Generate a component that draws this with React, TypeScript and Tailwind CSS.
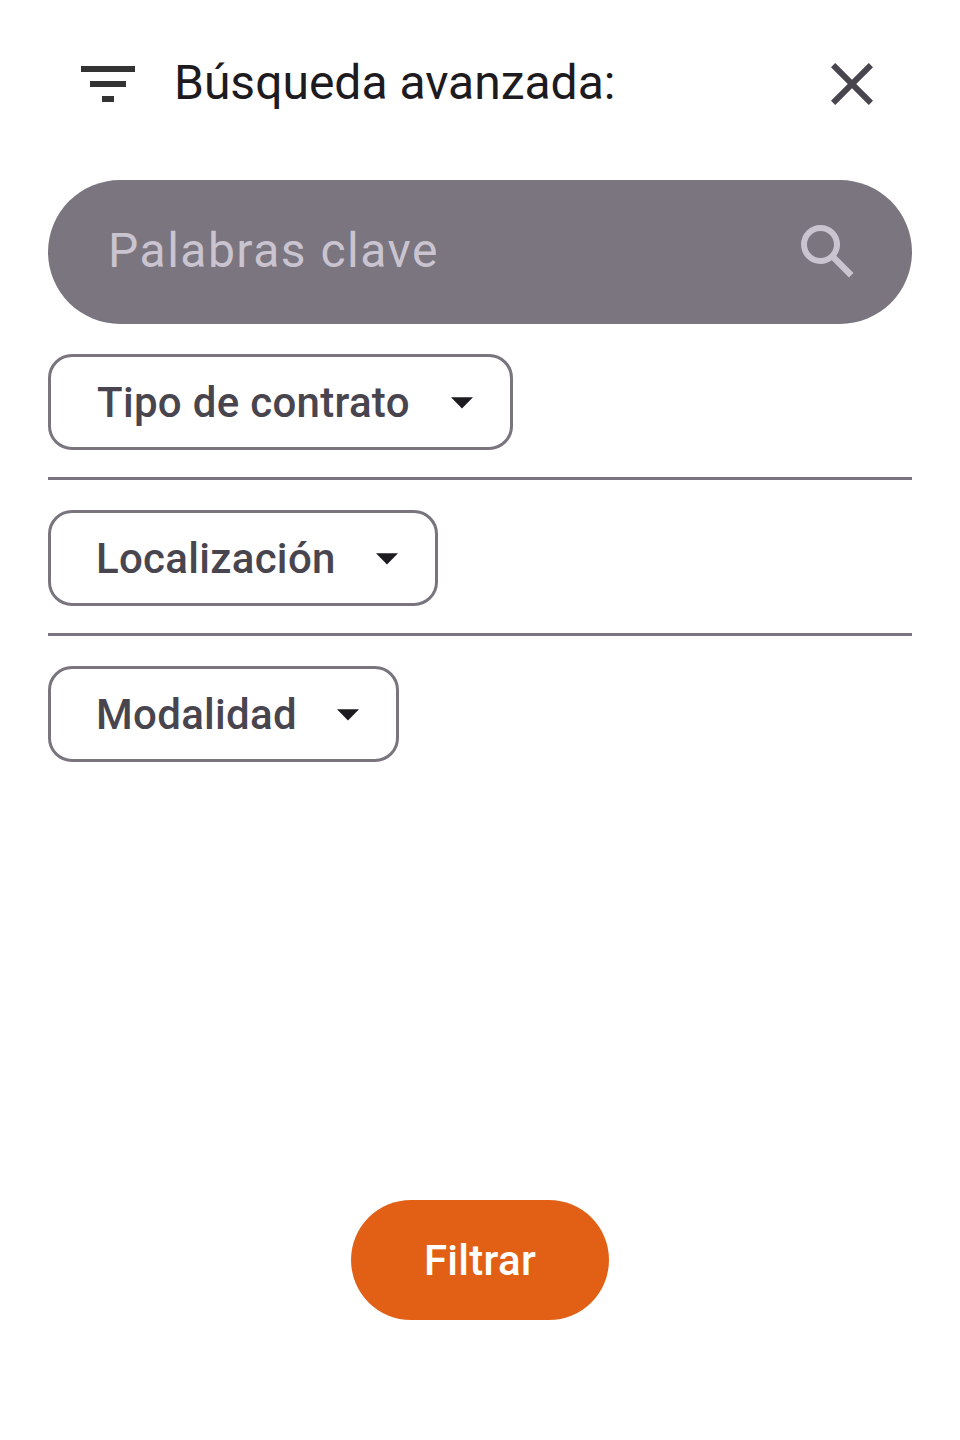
import React from "react";

const filters = [
  { label: "Tipo de contrato", size: "w-[465px] pl-[46px]" },
  { label: "Localización", size: "w-[390px] pl-[45px]" },
  { label: "Modalidad", size: "w-[351px] pl-[45px]" },
];

function FilterChip({ label, size }: { label: string; size: string }) {
  return (
    <button className={`flex h-24 items-center justify-between rounded-3xl border-[3px] border-[#79747e] pr-3 text-[42px] leading-[60px] font-medium tracking-[0.3px] text-[#49454f] ${size}`}>
      <span className="whitespace-nowrap pt-0.5">{label}</span>
      <svg className="size-[72px] shrink-0" viewBox="0 0 24 24" fill="#1d1b20">
        <path d="M8.33 10.4h7.34L12 14.2z" />
      </svg>
    </button>
  );
}

export default function App() {
  return (
    <main className="flex h-[1440px] w-[960px] flex-col bg-white px-12 font-['Roboto',sans-serif]">
      <header className="flex h-[168px] items-center pl-6 pr-6">
        <svg className="size-[72px]" viewBox="0 0 24 24" fill="#333333">
          <path d="M10 18h4v-2h-4v2zM3 6v2h18V6H3zm3 7h12v-2H6v2z" />
        </svg>
        <h1 className="ml-[30px] flex-1 pb-0.5 text-[48px] leading-[72px] font-normal text-[#1d1b20]">Búsqueda avanzada:</h1>
        <svg className="size-[72px]" viewBox="0 0 24 24" fill="#49454f">
          <path d="M19 6.41 17.59 5 12 10.59 6.41 5 5 6.41 10.59 12 5 17.59 6.41 19 12 13.41 17.59 19 19 17.59 13.41 12z" />
        </svg>
      </header>
      <div className="mt-3 flex h-36 items-center justify-between rounded-full bg-[#7b757f] pl-[60px] pr-12">
        <span className="pb-0.5 text-[48px] leading-[72px] tracking-[1.5px] text-[#cac4d0]">Palabras clave</span>
        <svg className="size-[72px]" viewBox="0 0 24 24" fill="#cac4d0">
          <path d="M19 20.49l-5.73-5.74A6.5 6.5 0 0 1 9.5 16 6.5 6.5 0 1 1 16 9.5a6.5 6.5 0 0 1-1.24 3.77L20.49 19 19 20.49zM9.5 14A4.5 4.5 0 1 0 5 9.5 4.5 4.5 0 0 0 9.5 14z" />
        </svg>
      </div>
      <div className="mt-[30px] flex flex-col items-start">
        {filters.map(({ label, size }, i) => (
          <React.Fragment key={label}>
            {i > 0 && <hr className="mt-[27px] mb-[30px] w-full border-t-[3px] border-[#79747e]" />}
            <FilterChip label={label} size={size} />
          </React.Fragment>
        ))}
      </div>
      <button className="mt-auto mb-[120px] flex h-[120px] w-[258px] items-center justify-center self-center rounded-full bg-[#e26016] pt-0.5 text-[42px] leading-[60px] font-medium tracking-[0.3px] text-white">
        Filtrar
      </button>
    </main>
  );
}
